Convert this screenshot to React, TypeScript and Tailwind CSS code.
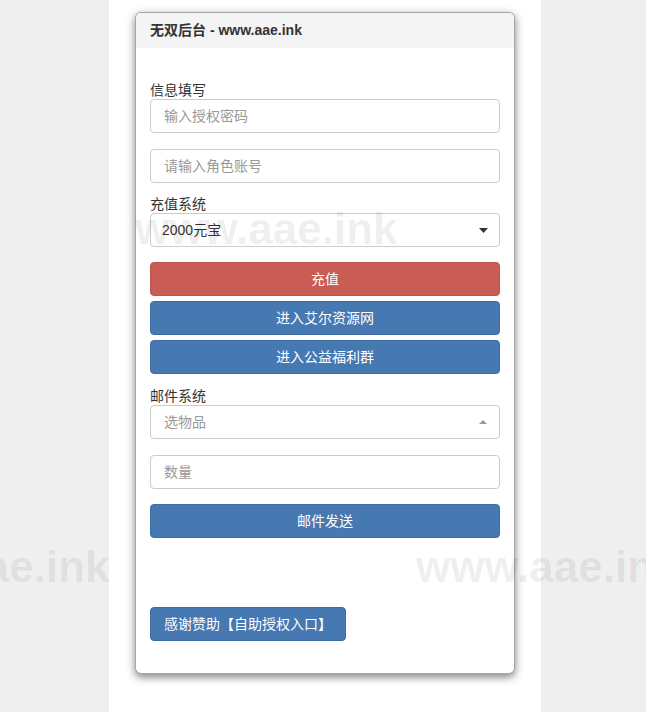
import React from "react";

const cjk = { fontFamily: '"Liberation Sans", "Noto Sans CJK SC", sans-serif' };

function Label({ children }: { children: React.ReactNode }) {
  return <div className="text-[14px] leading-[22px] text-[#333] h-[20px]">{children}</div>;
}

function Input({ placeholder }: { placeholder: string }) {
  return (
    <div className="h-[34px] border border-[#ccc] rounded-[4px] px-[13px] flex items-center text-[14px] text-[#999] bg-white">
      {placeholder}
    </div>
  );
}

function Btn({ children, red }: { children: React.ReactNode; red?: boolean }) {
  return (
    <div
      className={
        "h-[34px] rounded-[4px] flex items-center justify-center text-[14px] text-white border " +
        (red ? "bg-[#c95c55] border-[#bd524b]" : "bg-[#4678b2] border-[#3f6ca3]")
      }
    >
      {children}
    </div>
  );
}

export default function App() {
  return (
    <div className="relative min-h-[712px] bg-[#efefef] overflow-hidden" style={cjk}>
      <div className="ml-[109px] w-[432px] min-h-[712px] bg-white pt-[12px] px-[26px]">
        <div className="border border-[rgba(0,0,0,0.35)] rounded-[6px] shadow-[0_3px_9px_rgba(0,0,0,0.5)] bg-white overflow-hidden">
          <div className="h-[35px] bg-[#f4f4f4] pl-[14px] flex items-center text-[14px] font-bold text-[#333]">
            无双后台 - www.aae.ink
          </div>
          <div className="px-[14px] pt-[31px] pb-[32px]">
            <Label>信息填写</Label>
            <Input placeholder="输入授权密码" />
            <div className="mt-[16px]">
              <Input placeholder="请输入角色账号" />
            </div>
            <div className="mt-[10px]">
              <Label>充值系统</Label>
            </div>
            <div className="h-[34px] border border-[#ccc] rounded-[4px] pl-[11px] pr-[11px] flex items-center justify-between text-[14px] text-[#333] bg-white">
              <span>2000元宝</span>
              <svg width="9" height="5" viewBox="0 0 9 5">
                <path d="M0 0 L9 0 L4.5 5 Z" fill="#333" />
              </svg>
            </div>
            <div className="mt-[15px]">
              <Btn red>充值</Btn>
            </div>
            <div className="mt-[5px]">
              <Btn>进入艾尔资源网</Btn>
            </div>
            <div className="mt-[5px]">
              <Btn>进入公益福利群</Btn>
            </div>
            <div className="mt-[11px]">
              <Label>邮件系统</Label>
            </div>
            <div className="h-[34px] border border-[#ccc] rounded-[4px] pl-[13px] pr-[12px] flex items-center justify-between text-[14px] text-[#999] bg-white">
              <span>选物品</span>
              <svg width="8" height="4" viewBox="0 0 8 4">
                <path d="M0 4 L8 4 L4 0 Z" fill="#999" />
              </svg>
            </div>
            <div className="mt-[16px]">
              <Input placeholder="数量" />
            </div>
            <div className="mt-[15px]">
              <Btn>邮件发送</Btn>
            </div>
            <div className="mt-[69px] flex">
              <div className="h-[34px] rounded-[4px] px-[13px] flex items-center text-[14px] text-white bg-[#4678b2] border border-[#3f6ca3]">
                感谢赞助【自助授权入口】
              </div>
            </div>
          </div>
        </div>
      </div>
      <div className="pointer-events-none absolute inset-0" style={{ fontFamily: '"Liberation Sans", sans-serif' }}>
        <div className="absolute left-[135px] top-[207px] text-[44px] leading-[44px] font-bold text-[rgba(0,0,0,0.07)] whitespace-nowrap">
          www.aae.ink
        </div>
        <div className="absolute left-[-153px] top-[545px] text-[44px] leading-[44px] font-bold text-[rgba(0,0,0,0.07)] whitespace-nowrap">
          www.aae.ink
        </div>
        <div className="absolute left-[416px] top-[545px] text-[44px] leading-[44px] font-bold text-[rgba(0,0,0,0.07)] whitespace-nowrap">
          www.aae.ink
        </div>
      </div>
    </div>
  );
}
